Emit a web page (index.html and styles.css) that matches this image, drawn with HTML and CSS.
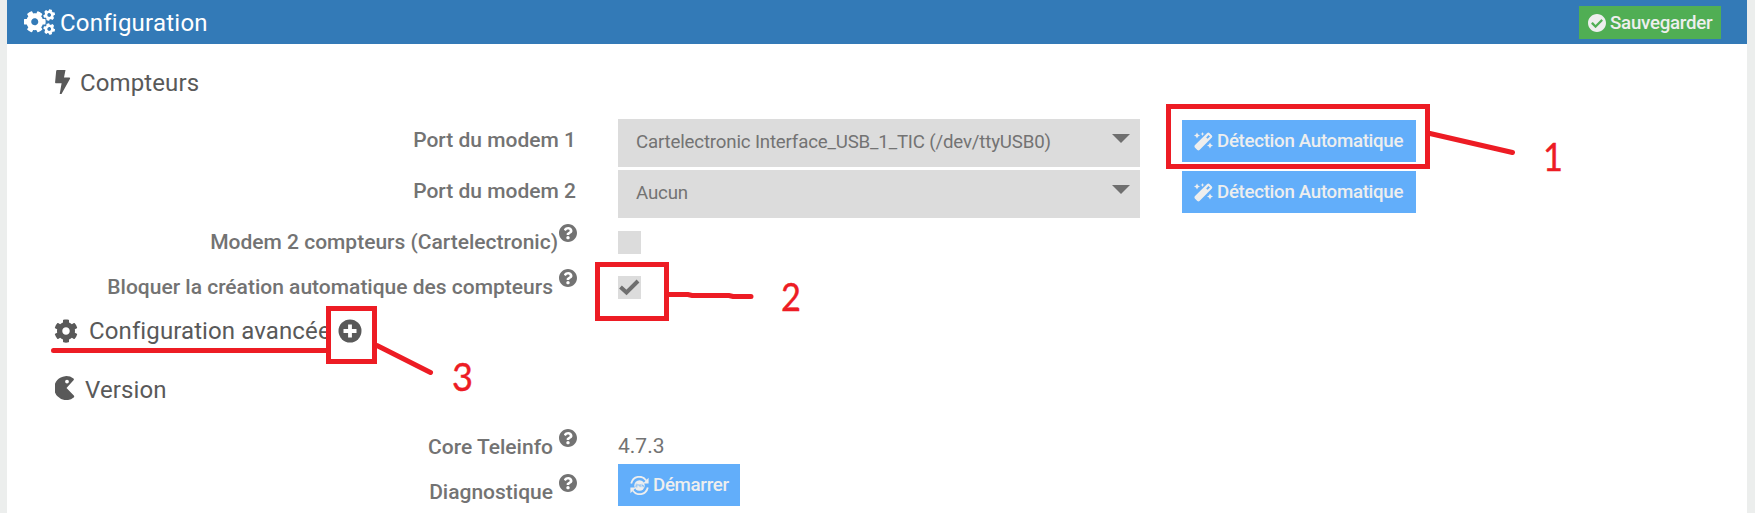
FILE: index.html
```html
<!DOCTYPE html>
<html lang="fr">
<head>
<meta charset="utf-8">
<title>Configuration</title>
<link rel="stylesheet" href="styles.css">
</head>
<body>
<svg class="defs" width="0" height="0">
  <symbol id="cog" viewBox="0 0 512 512"><path d="M487.4 315.7l-42.6-24.6c4.3-23.2 4.3-47 0-70.2l42.6-24.6c4.9-2.8 7.1-8.6 5.5-14-11.1-35.6-30-67.8-54.7-94.6-3.8-4.1-10-5.1-14.8-2.3L380.8 110c-17.9-15.4-38.5-27.3-60.8-35.1V25.8c0-5.6-3.9-10.5-9.4-11.7-36.7-8.2-74.3-7.8-109.2 0-5.5 1.2-9.4 6.1-9.4 11.7V75c-22.2 7.900-42.8 19.8-60.800 35.100L88.700 85.500c-4.900-2.800-11-1.900-14.800 2.300-24.700 26.700-43.600 58.900-54.700 94.600-1.700 5.400.6 11.200 5.500 14L67.300 221c-4.300 23.200-4.300 47 0 70.200l-42.600 24.600c-4.900 2.800-7.100 8.600-5.500 14 11.100 35.600 30 67.800 54.700 94.600 3.800 4.100 10 5.100 14.800 2.300l42.600-24.600c17.900 15.400 38.500 27.300 60.800 35.100v49.200c0 5.600 3.900 10.500 9.400 11.700 36.700 8.200 74.300 7.800 109.200 0 5.500-1.200 9.400-6.100 9.400-11.700v-49.200c22.200-7.900 42.800-19.800 60.800-35.100l42.600 24.600c4.900 2.800 11 1.900 14.800-2.300 24.700-26.700 43.600-58.900 54.700-94.600 1.500-5.500-.7-11.300-5.600-14.100zM256 336c-44.100 0-80-35.900-80-80s35.900-80 80-80 80 35.900 80 80-35.900 80-80 80z"/></symbol>
  <symbol id="help" viewBox="8 8 496 496"><path d="M504 256c0 136.997-111.043 248-248 248S8 392.997 8 256C8 119.083 119.043 8 256 8s248 111.083 248 248zM262.655 90c-54.497 0-89.255 22.957-116.549 63.758-3.536 5.286-2.353 12.415 2.715 16.258l34.699 26.31c5.205 3.947 12.621 3.008 16.665-2.122 17.864-22.658 30.113-35.797 57.303-35.797 20.429 0 45.698 13.148 45.698 32.958 0 14.976-12.363 22.667-32.534 33.976C247.128 238.528 216 254.941 216 296v4c0 6.627 5.373 12 12 12h56c6.627 0 12-5.373 12-12v-1.333c0-28.462 83.186-29.647 83.186-106.667 0-58.002-60.165-102-116.531-102zM256 338c-25.365 0-46 20.635-46 46 0 25.364 20.635 46 46 46s46-20.636 46-46c0-25.365-20.635-46-46-46z"/></symbol>
  <symbol id="wand" viewBox="0 0 19 19">
    <path fill-rule="evenodd" d="M.8 13.300 13.200.9Q14.300 0 15.400.9L17.900 3.400Q18.800 4.500 17.900 5.600L5.500 18Q4.400 18.900 3.300 18L.8 15.500Q0 14.400.8 13.300ZM12.200 5.500 13.500 6.800 16 4.500 14.500 3Z"/>
    <path d="M3 .5 4 2.600 6 3.500 4 4.400 3 6.500 2 4.400 0 3.500 2 2.600ZM16 10.500 17 12.600 19 13.500 17 14.400 16 16.500 15 14.400 13 13.500 15 12.600ZM8.500 0 9.100 1.400 10.500 2 9.100 2.600 8.500 4 7.900 2.600 6.500 2 7.900 1.400Z"/>
  </symbol>
</svg>

<main class="panel">
  <header class="bar">
    <h1 class="bar-title">
      <svg class="cogs" viewBox="0 0 31 26">
        <use href="#cog" x="-0.500" y="1.500" width="22.500" height="22.500" transform="rotate(30 10.750 12.750)"/>
        <use href="#cog" x="19.200" y="0" width="12" height="12" transform="rotate(15 25.200 6)"/>
        <use href="#cog" x="19.200" y="14" width="12" height="12" transform="rotate(-15 25.200 20)"/>
      </svg>
      <span class="t-title">Configuration</span>
    </h1>
    <button class="save">
      <svg class="i18" viewBox="8 8 496 496"><path d="M504 256c0 137-111 248-248 248S8 393 8 256 119 8 256 8s248 111 248 248zM227.314 387.314l184-184c6.248-6.248 6.248-16.379 0-22.627l-22.627-22.627c-6.248-6.249-16.379-6.249-22.628 0L216 308.118l-70.059-70.059c-6.248-6.248-16.379-6.248-22.628 0l-22.627 22.627c-6.248 6.248-6.248 16.379 0 22.627l104 104c6.249 6.249 16.379 6.249 22.628.001z"/></svg>
      <span>Sauvegarder</span>
    </button>
  </header>

  <section class="meters">
    <h2 class="legend">
      <svg class="bolt" viewBox="0 0 16 24"><path d="M2.200 0H10.500L9 7.500H14.500Q15.500 7.700 15 8.700L6.500 24H4.700L6.600 13.200H.8Q0 13.100.1 12.200L1.200.8Q1.400 0 2.200 0Z"/></svg>
      <span>Compteurs</span>
    </h2>
    <div class="row tall">
      <label class="label"><span>Port du modem 1</span></label>
      <div class="select"><span>Cartelectronic Interface_USB_1_TIC (/dev/ttyUSB0)</span><i class="caret"></i></div>
      <button class="btn"><svg class="i19"><use href="#wand"/></svg><span>Détection Automatique</span></button>
    </div>
    <div class="row tall">
      <label class="label"><span>Port du modem 2</span></label>
      <div class="select"><span>Aucun</span><i class="caret"></i></div>
      <button class="btn"><svg class="i19"><use href="#wand"/></svg><span>Détection Automatique</span></button>
    </div>
    <div class="row">
      <label class="label tight"><span>Modem 2 compteurs (Cartelectronic)</span><svg class="help"><use href="#help"/></svg></label>
      <div class="check"></div>
    </div>
    <div class="row">
      <label class="label"><span>Bloquer la création automatique des compteurs</span><svg class="help"><use href="#help"/></svg></label>
      <div class="check"><svg class="tick" viewBox="0 0 23 23"><path d="M2.500 11 8.500 16.500 20 5"/></svg></div>
    </div>
  </section>

  <section class="advanced">
    <h2 class="legend">
      <svg class="i24"><use href="#cog"/></svg>
      <span>Configuration avancée</span>
      <svg class="plus" viewBox="0 0 24 24"><circle cx="12" cy="12" r="11.500"/><path d="M12 5.500V18.500M5.500 12H18.500"/></svg>
    </h2>
  </section>

  <section class="version">
    <h2 class="legend">
      <svg class="pac" viewBox="0 0 20 24"><path fill-rule="evenodd" d="M18.500 4.300 11.500 12 18.800 19.500Q19.700 20.500 18.700 21.500A12 12 0 1 1 18.500 2.600Q19.300 3.400 18.500 4.300ZM12 3.700A1.900 1.900 0 1 0 12 7.500 1.900 1.900 0 1 0 12 3.700Z"/></svg>
      <span>Version</span>
    </h2>
    <div class="row">
      <label class="label"><span>Core Teleinfo</span><svg class="help"><use href="#help"/></svg></label>
      <span class="value">4.7.3</span>
    </div>
    <div class="row">
      <label class="label"><span>Diagnostique</span><svg class="help"><use href="#help"/></svg></label>
      <button class="btn small">
        <svg class="i19" viewBox="0 0 19 19">
          <path d="M1.200 7.500C3 0 12 -1.500 16.200 4.500M17.800 11.500C16 19 7 20.500 2.800 14.500" fill="none" stroke="currentColor" stroke-width="1.800"/>
          <path d="M18.600 1.800V7.500H13ZM.4 17.200V11.500H6Z"/>
          <circle cx="9.500" cy="9.500" r="5.200"/>
          <path d="M5.600 8.200h1.700v1.400H5.800v1.300h1.700M8.800 8v1.800h1.600M10.200 8v3.200M12 7.800v3.400M12 9.500h1.500v1.700" fill="none" stroke="#62aefa" stroke-width=".6"/>
        </svg>
        <span>Démarrer</span>
      </button>
    </div>
  </section>
</main>

<svg class="notes" viewBox="0 0 1755 513">
  <g class="ink">
    <rect x="1168.500" y="106.500" width="259" height="60"/>
    <rect x="597.500" y="264.500" width="69" height="54"/>
    <rect x="328.500" y="308.500" width="46" height="53"/>
    <path d="M1430 133.500 1512.500 152.500M669 294.500H688L692 295.500H729L733 296.500H751M377 345.500 430.500 372.500M53.500 350.500H327"/>
  </g>
  <g class="digits">
    <text x="1543" y="171" textLength="20" lengthAdjust="spacingAndGlyphs">1</text>
    <text x="781" y="311" textLength="20" lengthAdjust="spacingAndGlyphs">2</text>
    <text x="452" y="391" textLength="21" lengthAdjust="spacingAndGlyphs">3</text>
  </g>
</svg>
</body>
</html>
```
FILE: styles.css
```css
* { box-sizing: border-box; }
body { margin: 0; width: 1755px; height: 513px; overflow: hidden; background: #eceeed; font-family: Roboto, sans-serif; color: #737373; }
svg { display: block; fill: currentColor; flex: none; }
.defs { position: absolute; }
button { border: 0; padding: 0; font-family: inherit; color: #eee; display: flex; align-items: center; }
span { white-space: nowrap; }

.panel { margin: 0 8px 0 7px; height: 513px; background: #fff; }
.bar { height: 44px; padding: 0 26px 0 17px; background: #337ab7; color: #fff; display: flex; justify-content: space-between; align-items: center; }
.bar-title { margin: 0; display: flex; align-items: center; gap: 5px; font-size: 24px; font-weight: 400; line-height: 44px; letter-spacing: 0.230px; }
.t-title { padding-top: 1px; }
.cogs { width: 31px; height: 26px; }
.save { width: 142px; height: 33px; margin-top: 1px; padding-left: 9px; gap: 4px; background: #50ae54; font-size: 18.700px; font-weight: 500; letter-spacing: -0.250px; }
.i18 { width: 18px; height: 18px; }
.i19 { width: 19px; height: 19px; }
.i24 { width: 24px; height: 24px; }

.meters { padding: 21px 0 0 48px; }
.legend { margin: 0; height: 36px; display: flex; align-items: center; font-size: 24px; font-weight: 400; line-height: 36px; letter-spacing: 0.110px; color: #595959; }
.bolt { width: 16px; height: 24px; margin: -2px 9px 0 0; }
.meters .legend, .version .legend { margin-bottom: 18px; }
.row { display: grid; grid-template-columns: 522px 522px 234px; column-gap: 41px; height: 45px; }
.row.tall { height: 51px; }
.label { height: 30px; margin-top: 6px; display: flex; justify-content: flex-end; gap: 6px; font-size: 21px; font-weight: 500; line-height: 30px; }
.label.tight { gap: 1px; }
.tall .label { padding-right: 1px; }
.help { width: 18px; height: 18px; margin-top: -3px; }
.select { height: 48px; padding: 0 10px 0 18px; background: #dcdcdc; display: flex; justify-content: space-between; font-size: 18.700px; line-height: 47px; letter-spacing: -0.180px; }
.caret { width: 18px; height: 9px; margin-top: 15px; background: #6f6f6f; clip-path: polygon(0 0, 100% 0, 50% 100%); }
.btn { width: 234px; height: 42px; margin: 1px 0 0 1px; padding-left: 12px; gap: 4px; background: #62aefa; font-size: 18.700px; font-weight: 500; letter-spacing: -0.300px; }
.check { width: 23px; height: 23px; margin-top: 10px; background: #dcdcdc; }
.tick { width: 23px; height: 23px; fill: none; stroke: #6f6f6f; stroke-width: 4; }

.advanced { padding: 2px 0 0 47px; }
.advanced .i24 { margin-right: 11px; }
.plus { width: 24px; height: 24px; margin-left: 7px; }
.plus path { stroke: #fff; stroke-width: 3.800; }

.version { padding: 23px 0 0 48px; }
.pac { width: 20px; height: 24px; margin: -5px 10px 0 0; }
.value { font-size: 21px; line-height: 30px; margin-top: 5px; }
.btn.small { width: 122px; margin: -7px 0 0; }

.notes { position: absolute; left: 0; top: 0; width: 1755px; height: 513px; }
.ink { fill: none; stroke: #ed1c24; stroke-width: 5; stroke-linecap: round; }
.digits { fill: #ed1c24; stroke: #ed1c24; stroke-width: 0.400; font: 39px Lato, sans-serif; }
```
